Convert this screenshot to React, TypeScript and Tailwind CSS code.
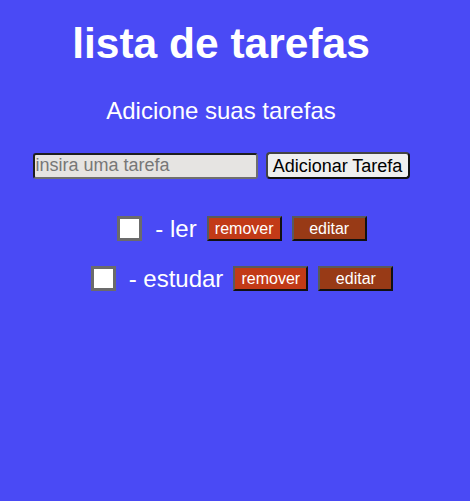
import React from "react";

const Row = ({ label }: { label: string }) => (
  <div className="flex items-center h-[25px]">
    <input
      type="checkbox"
      className="appearance-none w-[25px] h-[25px] border-[3px] border-[#6b6b6b] bg-white m-0"
    />
    <span className="ml-[13px] text-[24px] leading-none text-white">{label}</span>
    <button className="ml-[10px] w-[75px] h-[25px] bg-[#c23a17] text-white text-[16px] leading-none border-2 border-t-[#5a5a5a] border-l-[#5a5a5a] border-b-[#111] border-r-[#111]">
      remover
    </button>
    <button className="ml-[10px] w-[75px] h-[25px] bg-[#983a16] text-white text-[16px] leading-none border-2 border-t-[#5a5a5a] border-l-[#5a5a5a] border-b-[#111] border-r-[#111]">
      editar
    </button>
  </div>
);

export default function App() {
  return (
    <div
      className="w-[470px] h-[501px] bg-[#4a4af5] overflow-hidden"
      style={{ fontFamily: '"Liberation Sans", Arial, sans-serif' }}
    >
      <div className="flex flex-col items-center pr-[28px]">
        <h1 className="mt-[20px] text-[42.5px] font-bold text-white leading-[48px]">
          lista de tarefas
        </h1>
        <p className="mt-[29px] text-[24px] text-white leading-[28px]">Adicione suas tarefas</p>
        <div className="mt-[27px] flex items-center gap-[8px]">
          <input
            type="text"
            placeholder="insira uma tarefa"
            className="w-[225px] h-[26px] px-[1px] bg-[#e6e4e2] text-[18px] leading-none rounded-[3px] border-2 border-t-[#1e1e1e] border-l-[#1e1e1e] border-b-[#6f6f6f] border-r-[#6f6f6f] placeholder:text-[#777] outline-none"
          />
          <button className="w-[144px] h-[27px] bg-[#efefef] text-black text-[18px] leading-none rounded-[4px] border-2 border-t-[#444] border-l-[#444] border-b-[#111] border-r-[#111]">
            Adicionar Tarefa
          </button>
        </div>
      </div>
      <div className="flex flex-col items-center pl-[14px] mt-[37px] gap-[25px]">
        <Row label="- ler" />
        <Row label="- estudar" />
      </div>
    </div>
  );
}
